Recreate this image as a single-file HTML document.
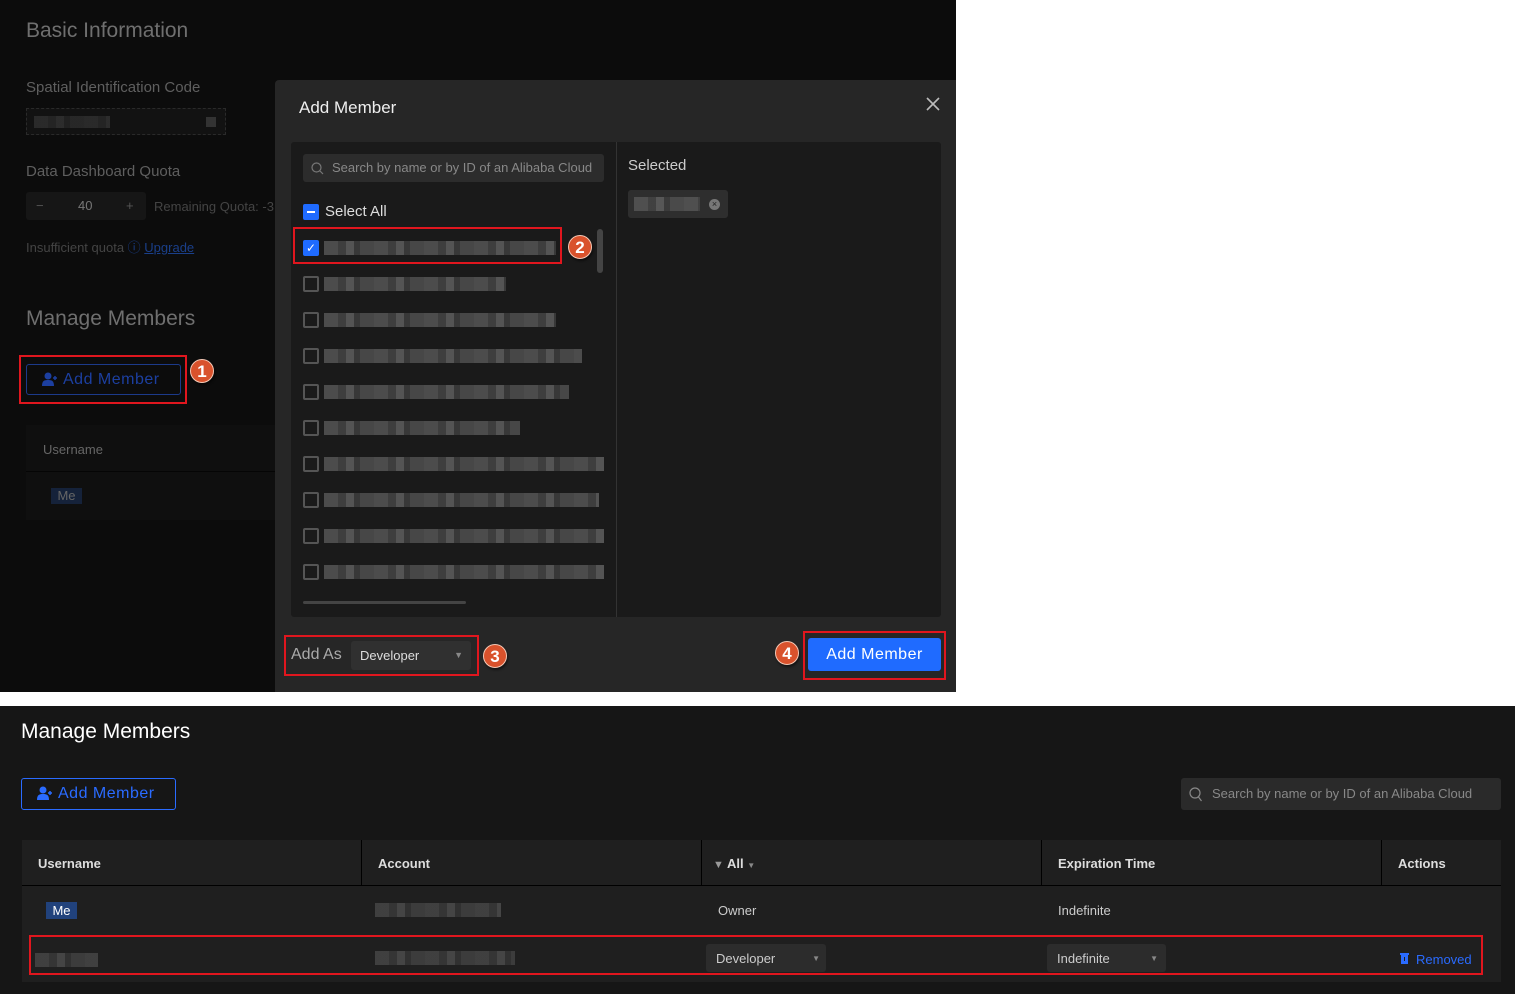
<!DOCTYPE html>
<html><head><meta charset="utf-8"><style>
*{margin:0;padding:0;box-sizing:border-box}
body{width:1515px;height:994px;background:#fff;position:relative;overflow:hidden;font-family:"Liberation Sans",sans-serif}
.a{position:absolute}
.blur{position:absolute;height:14px;background:repeating-linear-gradient(90deg,#555 0 14px,#444 14px 22px,#5e5e5e 22px 30px,#3d3d3d 30px 36px,#4f4f4f 36px 50px);opacity:.85}
.cb{position:absolute;width:16px;height:16px;border:2px solid #555;border-radius:2px}
.red{position:absolute;border:2px solid #e0161e}
.num{position:absolute;width:24px;height:24px;border-radius:50%;background:#d9522c;color:#fff;font:bold 17px "Liberation Sans",sans-serif;text-align:center;line-height:24px;box-shadow:1px 2px 2px rgba(0,0,0,.5);border:1.5px solid #f5c8b5}
.th{position:absolute;top:840px;height:46px;line-height:46px;color:#ddd;font-size:13px;font-weight:bold}
</style></head><body>
<div class="a" style="left:0;top:0;width:956px;height:692px;background:#0c0c0c"></div>
<div class="a" style="left:26px;top:19px;color:#6f6f6f;font-size:21px">Basic Information</div>
<div class="a" style="left:26px;top:79px;color:#5f5f5f;font-size:15px">Spatial Identification Code</div>
<div class="a" style="left:26px;top:108px;width:200px;height:27px;border:1px dashed #2a2a2a;background:#121212"></div>
<div class="blur" style="left:34px;top:116px;width:76px;height:12px;opacity:.35"></div>
<div class="a" style="left:206px;top:117px;width:10px;height:10px;background:#333"></div>
<div class="a" style="left:26px;top:163px;color:#5f5f5f;font-size:15px">Data Dashboard Quota</div>
<div class="a" style="left:26px;top:192px;width:120px;height:28px;background:#161616;border-radius:3px;color:#555;font-size:13px;line-height:28px"><span style="position:absolute;left:10px">−</span><span style="position:absolute;left:52px;color:#777">40</span><span style="position:absolute;left:100px">+</span></div>
<div class="a" style="left:154px;top:199px;color:#444;font-size:13px">Remaining Quota: -3</div>
<div class="a" style="left:26px;top:237px;color:#444;font-size:13px">Insufficient quota <span style="color:#1a3f8a">ⓘ <u>Upgrade</u></span></div>
<div class="a" style="left:26px;top:307px;color:#6f6f6f;font-size:21px">Manage Members</div>
<div class="a" style="left:26px;top:364px;width:155px;height:31px;border:1px solid #1c3a8a;border-radius:3px;color:#1c3fa0;font-size:16px;line-height:29px;padding-left:36px;letter-spacing:.5px">Add Member</div>
<svg class="a" style="left:42px;top:372px" width="16" height="15"><circle cx="6" cy="4" r="3.5" fill="#1c3fa0"/><path d="M0 14c0-5 2-6 6-6s6 1 6 6z" fill="#1c3fa0"/><path d="M11 6h4M13 4v4" stroke="#1c3fa0" stroke-width="1.5"/></svg>
<div class="red" style="left:19px;top:355px;width:168px;height:49px"></div>
<div class="num" style="left:190px;top:359px">1</div>
<div class="a" style="left:26px;top:425px;width:250px;height:95px;background:#0f0f0f"></div>
<div class="a" style="left:26px;top:471px;width:250px;height:1px;background:#050505"></div>
<div class="a" style="left:43px;top:442px;color:#666;font-size:13px">Username</div>
<div class="a" style="left:51px;top:488px;width:31px;height:16px;background:#15223a;color:#666;font-size:13px;text-align:center;line-height:16px">Me</div>

<div class="a" style="left:275px;top:80px;width:681px;height:612px;background:#262626;border-radius:4px 0 0 0"></div>
<div class="a" style="left:299px;top:98px;color:#eee;font-size:17px">Add Member</div>
<svg class="a" style="left:926px;top:97px" width="14" height="14"><path d="M1 1l12 12M13 1L1 13" stroke="#bbb" stroke-width="1.6"/></svg>
<div class="a" style="left:291px;top:142px;width:650px;height:475px;background:#1a1a1a;border-radius:3px"></div>
<div class="a" style="left:616px;top:142px;width:1px;height:475px;background:#333"></div>
<div class="a" style="left:303px;top:154px;width:301px;height:28px;background:#2c2c2c;border-radius:3px;color:#888;font-size:13px;line-height:28px;padding-left:29px;white-space:nowrap;overflow:hidden">Search by name or by ID of an Alibaba Cloud</div>
<svg class="a" style="left:311px;top:162px" width="13" height="13"><circle cx="5.5" cy="5.5" r="4.5" fill="none" stroke="#777" stroke-width="1.2"/><path d="M9 9l3 3" stroke="#777" stroke-width="1.2"/></svg>
<div class="a" style="left:303px;top:204px;width:16px;height:16px;background:#1f6bff;border-radius:2px"><div style="position:absolute;left:4px;top:7px;width:8px;height:2px;background:#fff"></div></div>
<div class="a" style="left:325px;top:203px;color:#ddd;font-size:15px">Select All</div>
<div class="a" style="left:303px;top:240px;width:16px;height:16px;background:#1f6bff;border-radius:2px;color:#fff;font-size:12px;text-align:center;line-height:16px">✓</div>
<div class="blur" style="left:324px;top:241px;width:232px"></div>
<div class="red" style="left:293px;top:227px;width:269px;height:37px"></div>
<div class="num" style="left:568px;top:235px">2</div>
<div class="a" style="left:597px;top:229px;width:6px;height:44px;background:#444;border-radius:3px"></div>
<div class="cb" style="left:303px;top:276px"></div><div class="blur" style="left:324px;top:277px;width:182px"></div>
<div class="cb" style="left:303px;top:312px"></div><div class="blur" style="left:324px;top:313px;width:232px"></div>
<div class="cb" style="left:303px;top:348px"></div><div class="blur" style="left:324px;top:349px;width:258px"></div>
<div class="cb" style="left:303px;top:384px"></div><div class="blur" style="left:324px;top:385px;width:245px"></div>
<div class="cb" style="left:303px;top:420px"></div><div class="blur" style="left:324px;top:421px;width:196px"></div>
<div class="cb" style="left:303px;top:456px"></div><div class="blur" style="left:324px;top:457px;width:280px"></div>
<div class="cb" style="left:303px;top:492px"></div><div class="blur" style="left:324px;top:493px;width:275px"></div>
<div class="cb" style="left:303px;top:528px"></div><div class="blur" style="left:324px;top:529px;width:280px"></div>
<div class="cb" style="left:303px;top:564px"></div><div class="blur" style="left:324px;top:565px;width:280px"></div>
<div class="a" style="left:303px;top:601px;width:163px;height:3px;background:#444;border-radius:2px"></div>
<div class="a" style="left:628px;top:157px;color:#ccc;font-size:15px">Selected</div>
<div class="a" style="left:628px;top:190px;width:100px;height:28px;background:#2e2e2e;border-radius:3px"></div>
<div class="blur" style="left:634px;top:197px;width:66px"></div>
<div class="a" style="left:709px;top:199px;width:11px;height:11px;border-radius:50%;background:#777;color:#222;font-size:9px;text-align:center;line-height:11px">×</div>
<div class="a" style="left:291px;top:646px;color:#aaa;font-size:16px">Add As</div>
<div class="a" style="left:351px;top:641px;width:120px;height:29px;background:#303030;border-radius:3px;color:#ddd;font-size:13px;line-height:29px;padding-left:9px">Developer<span style="position:absolute;right:8px;color:#888;font-size:9px">▼</span></div>
<div class="red" style="left:284px;top:635px;width:195px;height:41px"></div>
<div class="num" style="left:483px;top:644px">3</div>
<div class="num" style="left:775px;top:641px">4</div>
<div class="a" style="left:808px;top:638px;width:133px;height:33px;background:#1f6bff;border-radius:3px;color:#fff;font-size:16px;text-align:center;line-height:33px;letter-spacing:.5px">Add Member</div>
<div class="red" style="left:803px;top:631px;width:143px;height:49px"></div>

<div class="a" style="left:0;top:706px;width:1515px;height:288px;background:#161616"></div>
<div class="a" style="left:21px;top:720px;color:#fff;font-size:21px">Manage Members</div>
<div class="a" style="left:21px;top:778px;width:155px;height:32px;border:1px solid #2a6bff;border-radius:3px;color:#2a6bff;font-size:16px;line-height:30px;padding-left:36px;letter-spacing:.5px">Add Member</div>
<svg class="a" style="left:37px;top:786px" width="16" height="15"><circle cx="6" cy="4" r="3.5" fill="#2a6bff"/><path d="M0 14c0-5 2-6 6-6s6 1 6 6z" fill="#2a6bff"/><path d="M11 7h4M13 5v4" stroke="#2a6bff" stroke-width="1.5"/></svg>
<div class="a" style="left:1181px;top:778px;width:320px;height:32px;background:#2a2a2a;border-radius:3px;color:#888;font-size:13px;line-height:32px;padding-left:31px;white-space:nowrap;overflow:hidden">Search by name or by ID of an Alibaba Cloud</div>
<svg class="a" style="left:1189px;top:787px" width="14" height="15"><circle cx="6" cy="6" r="5" fill="none" stroke="#888" stroke-width="1.2"/><path d="M9.5 10l3 4" stroke="#888" stroke-width="1.2"/></svg>
<div class="a" style="left:22px;top:840px;width:1479px;height:142px;background:#1f1f1f"></div>
<div class="a" style="left:22px;top:885px;width:1479px;height:1px;background:#000"></div>
<div class="a" style="left:361px;top:840px;width:1px;height:45px;background:#000"></div>
<div class="a" style="left:701px;top:840px;width:1px;height:45px;background:#000"></div>
<div class="a" style="left:1041px;top:840px;width:1px;height:45px;background:#000"></div>
<div class="a" style="left:1381px;top:840px;width:1px;height:45px;background:#000"></div>
<div class="th" style="left:38px;top:841px">Username</div>
<div class="th" style="left:378px;top:841px">Account</div>
<div class="th" style="left:713px;top:841px"><span style="color:#999;font-size:11px">▼</span> All <span style="color:#888;font-size:8px">▼</span></div>
<div class="th" style="left:1058px;top:841px">Expiration Time</div>
<div class="th" style="left:1398px;top:841px">Actions</div>
<div class="a" style="left:46px;top:902px;width:31px;height:17px;background:#21427c;color:#fff;font-size:13px;text-align:center;line-height:17px">Me</div>
<div class="blur" style="left:375px;top:903px;width:126px;opacity:.6"></div>
<div class="a" style="left:718px;top:903px;color:#ccc;font-size:13px">Owner</div>
<div class="a" style="left:1058px;top:903px;color:#ccc;font-size:13px">Indefinite</div>
<div class="blur" style="left:35px;top:953px;width:63px;opacity:.6"></div>
<div class="blur" style="left:375px;top:951px;width:140px;opacity:.6"></div>
<div class="a" style="left:706px;top:944px;width:120px;height:28px;background:#2c2c2c;border-radius:3px;color:#ccc;font-size:13px;line-height:29px;padding-left:10px">Developer<span style="position:absolute;right:6px;color:#888;font-size:8px">▼</span></div>
<div class="a" style="left:1047px;top:944px;width:119px;height:28px;background:#2c2c2c;border-radius:3px;color:#ccc;font-size:13px;line-height:29px;padding-left:10px">Indefinite<span style="position:absolute;right:8px;color:#888;font-size:8px">▼</span></div>
<svg class="a" style="left:1400px;top:952px" width="9" height="12"><rect x="0" y="1" width="9" height="2" fill="#2a6bff"/><rect x="1" y="3" width="7" height="9" fill="#2a6bff"/><rect x="4" y="5" width="1" height="4" fill="#1f1f1f"/></svg>
<div class="a" style="left:1416px;top:952px;color:#2a6bff;font-size:13px">Removed</div>
<div class="red" style="left:29px;top:935px;width:1454px;height:40px"></div>
</body></html>
